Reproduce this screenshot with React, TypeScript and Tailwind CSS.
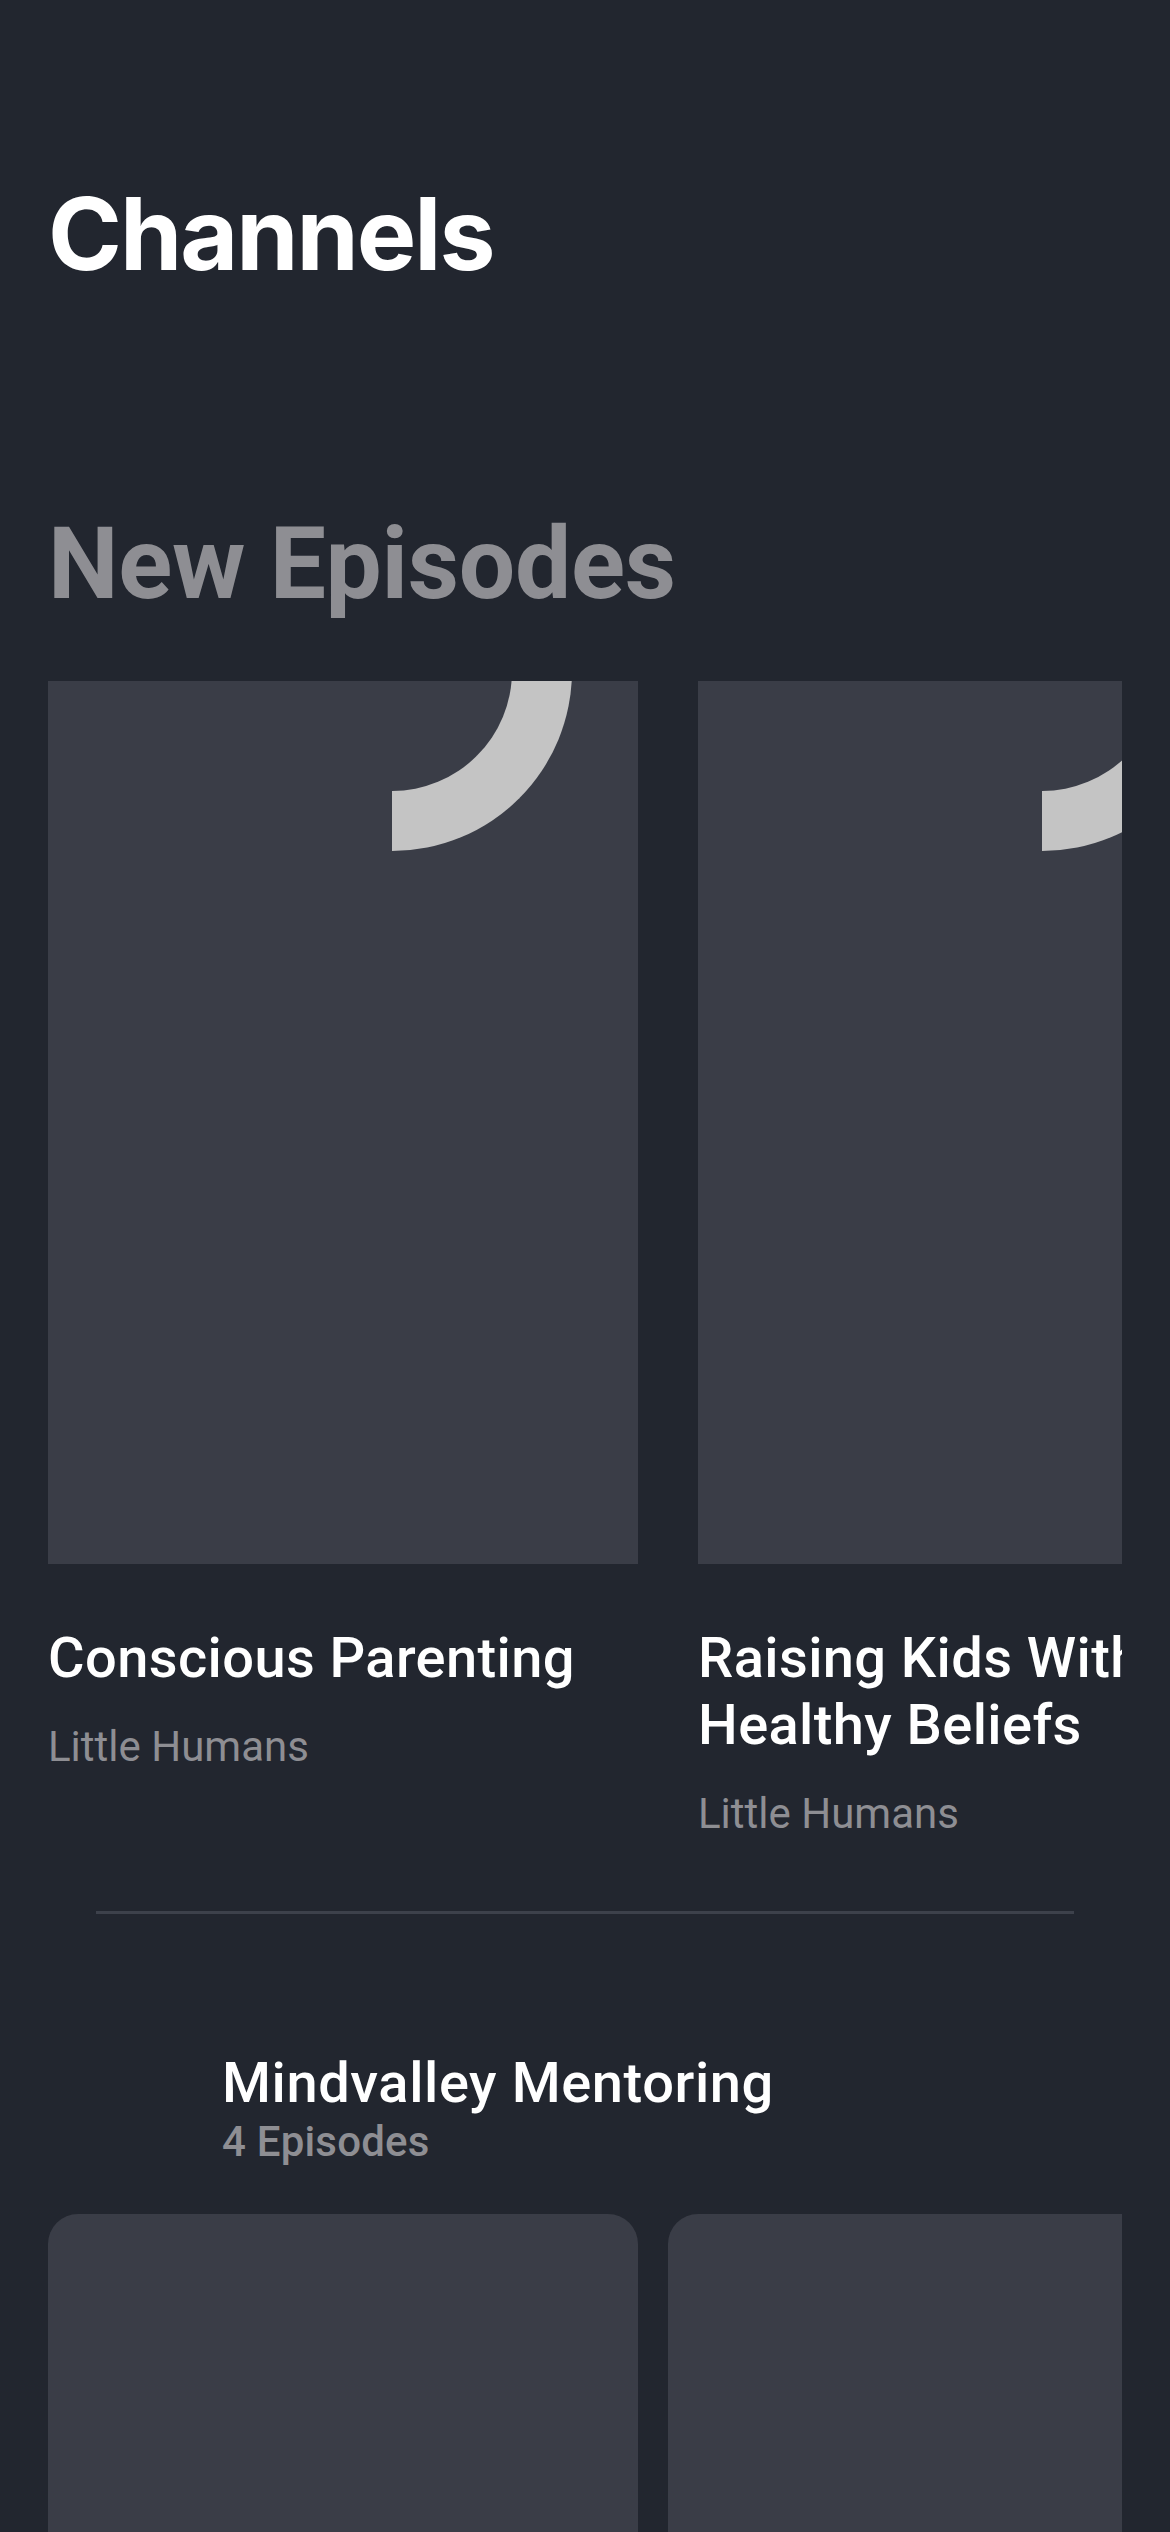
import React from "react";

interface Episode {
  id: number;
  title: string;
  channel: string;
}

const episodes: Episode[] = [
  { id: 1, title: "Conscious Parenting", channel: "Little Humans" },
  { id: 2, title: "Raising Kids With Healthy Beliefs", channel: "Little Humans" },
];

const EpisodeCard = ({ episode }: { episode: Episode }) => {
  return (
    <div className="w-[590px] shrink-0">
      <div className="relative h-[883px] w-[590px] overflow-hidden bg-[#3a3d47]">
        {/* placeholder artwork */}
        <div className="absolute left-[344px] top-[-10px] h-[180px] w-[180px] rounded-br-full border-b-[60px] border-r-[60px] border-[#c4c4c4]" />
      </div>
      <h3 className="mt-[61px] text-[56px] font-medium leading-[67px] tracking-[0.4px] text-white">
        {episode.title}
      </h3>
      <p className="mt-[30px] text-[42px] leading-[50px] text-[#8e8e93]">
        {episode.channel}
      </p>
    </div>
  );
};

export default function App() {
  return (
    <div className="min-h-screen w-[1170px] overflow-hidden bg-[#22262f] pb-10 font-['Roboto',sans-serif]">
      <h1 className="px-12 pt-[174px] font-['Inter',sans-serif] text-[100px] font-bold leading-[120px] tracking-[-2px] text-white">
        Channels
      </h1>

      <h2 className="mt-[210px] px-12 text-[100px] font-bold leading-[120px] tracking-[-0.3px] text-[#8e8e93]">
        New Episodes
      </h2>

      <div className="mx-12 mt-[57px] overflow-hidden">
        <div className="flex gap-[60px]">
          {episodes.map((episode) => (
            <EpisodeCard key={episode.id} episode={episode} />
          ))}
        </div>
      </div>

      <div className="mx-24 mt-[72px] h-[3px] bg-[#3d414b]" />

      <div className="mt-[136px] flex items-start gap-6 px-12">
        <div className="h-[100px] w-[150px] shrink-0" />
        <div className="flex flex-col">
          <span className="text-[56px] font-medium leading-[67px] tracking-[0.6px] text-white">
            Mindvalley Mentoring
          </span>
          <span className="mt-[2px] text-[42px] font-medium leading-[46px] tracking-[0.2px] text-[#8e8e93]">
            4 Episodes
          </span>
        </div>
      </div>

      <div className="mx-12 mt-[49px] overflow-hidden">
        <div className="flex gap-[30px]">
          <div className="h-[600px] w-[590px] shrink-0 rounded-[30px] bg-[#3a3d47]" />
          <div className="h-[600px] w-[590px] shrink-0 rounded-[30px] bg-[#3a3d47]" />
        </div>
      </div>
    </div>
  );
}
